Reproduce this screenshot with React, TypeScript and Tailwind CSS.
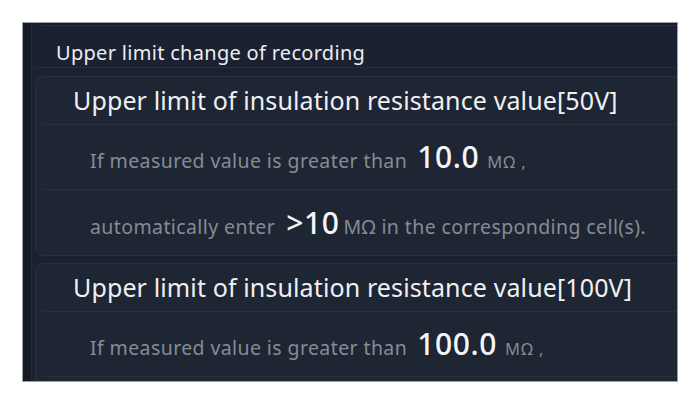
const cards = [
  {
    title: 'Upper limit of insulation resistance value[50V]',
    limit: '10.0',
    enter: '>10',
  },
  {
    title: 'Upper limit of insulation resistance value[100V]',
    limit: '100.0',
    enter: '>100',
  },
];

function Row({ children, last }: { children?: React.ReactNode; last?: boolean }) {
  return (
    <div
      className={`h-[65px] ml-[7px] flex items-center pl-[47px] whitespace-nowrap ${
        last ? '' : 'border-b border-[#283040]'
      }`}
    >
      <div className="leading-none">{children}</div>
    </div>
  );
}

function LimitCard({ card, cut }: { card: (typeof cards)[0]; cut?: boolean }) {
  return (
    <div className="w-[700px] shrink-0 rounded-[9px] border border-[#283140] bg-[#1e2533]">
      <div className="h-[48px] ml-[7px] pl-[30px] flex items-center border-b border-[#283040] text-[25px] tracking-[0.12px] text-[#eef0f3] whitespace-nowrap">
        {card.title}
      </div>
      <Row>
        <span className="text-[19.5px] tracking-[0.4px] text-[#868c96]">If measured value is greater than</span>
        <span className="ml-[10px] text-[30px] font-medium tracking-[0.6px] text-[#f4f5f7]">{card.limit}</span>
        <span className="ml-[8px] text-[16.5px] tracking-[1px] text-[#868c96]">MΩ ,</span>
      </Row>
      {cut ? (
        <Row last />
      ) : (
        <Row last>
          <span className="text-[19.5px] tracking-[0.4px] text-[#868c96]">automatically enter</span>
          <span className="ml-[11px] text-[30px] font-medium tracking-[0.6px] text-[#f4f5f7]">{card.enter}</span>
          <span className="ml-[4px] text-[19.5px] tracking-[0.4px] text-[#868c96]">
            MΩ in the corresponding cell(s).
          </span>
        </Row>
      )}
    </div>
  );
}

export default function App() {
  return (
    <div className="w-[700px] h-[405px] bg-white pt-[22px] pl-[22px] font-['Noto_Sans',sans-serif]">
      <div className="w-[656px] h-[360px] border border-[#9aa0a8] bg-[#1b2130] flex overflow-hidden">
        <div className="w-[9px] shrink-0 bg-[#151a24] border-r border-[#232a37]" />
        <div className="flex-1 pl-[3px] flex flex-col overflow-hidden">
          <div className="h-[14px] -mt-[11px] shrink-0 w-[700px] rounded-b-[9px] border border-[#283140] bg-[#171c27]" />
          <div className="h-[42px] shrink-0 flex items-center pt-[12px] pl-[21px] border-b border-[#262e3c] text-[20px] tracking-[0.3px] text-[#eceef1] whitespace-nowrap">
            Upper limit change of recording
          </div>
          <div className="flex flex-col gap-[7px] pt-[8px]">
            {cards.map((card, i) => (
              <LimitCard key={i} card={card} cut={i === cards.length - 1} />
            ))}
          </div>
        </div>
      </div>
    </div>
  );
}
